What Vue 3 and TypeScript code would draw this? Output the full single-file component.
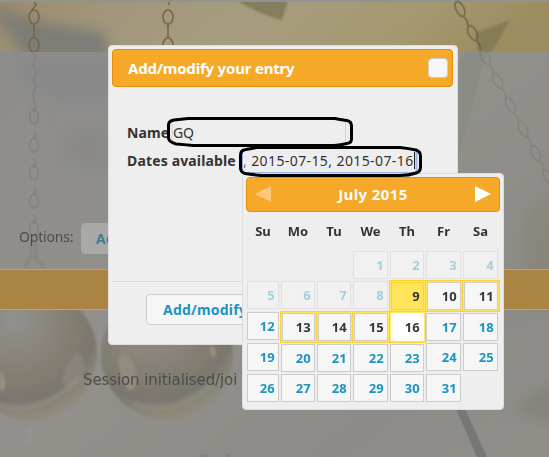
<script setup lang="ts">
interface Day {
  n: number
  past: boolean
  picked: boolean
  today: boolean
  current: boolean
  low: boolean
}

const weekdays = ['Su', 'Mo', 'Tu', 'We', 'Th', 'Fr', 'Sa']
const picked = [9, 10, 11, 13, 14, 15, 16]
const lowered = [17, 18, 20, 21, 22, 23]
const days: Day[] = Array.from({ length: 31 }, (_, i) => {
  const n = i + 1
  return {
    n,
    past: n < 9,
    picked: picked.includes(n),
    today: n === 9,
    current: n === 16,
    low: picked.includes(n) || lowered.includes(n),
  }
})

const leftLinks = [117, 145, 173, 201, 229]
const slantLinks = Array.from({ length: 8 }, (_, i) => ({ x: 460 + i * 12.6, y: 9 + i * 24 }))
</script>

<template>
  <div class="page">
    <svg class="scene" width="549" height="457" viewBox="0 0 549 457" aria-hidden="true">
      <defs>
        <linearGradient id="sky" x1="0" x2="1" y1="0" y2="0.1">
          <stop offset="0" stop-color="#9a8b6c" />
          <stop offset="0.2" stop-color="#a1967a" />
          <stop offset="0.5" stop-color="#a79d7f" />
          <stop offset="0.8" stop-color="#a4986f" />
          <stop offset="1" stop-color="#9c8c5f" />
        </linearGradient>
        <linearGradient id="haze" x1="0" x2="1" y1="0" y2="1">
          <stop offset="0" stop-color="#8d8c8a" />
          <stop offset="0.5" stop-color="#92908b" />
          <stop offset="0.8" stop-color="#8c8b87" />
          <stop offset="1" stop-color="#918f8a" />
        </linearGradient>
        <radialGradient id="ball" cx="0.38" cy="0.24" r="0.78">
          <stop offset="0" stop-color="#919190" />
          <stop offset="0.3" stop-color="#8b877c" />
          <stop offset="0.65" stop-color="#807b6f" />
          <stop offset="0.79" stop-color="#7a7770" />
          <stop offset="0.9" stop-color="#8a8576" />
          <stop offset="1" stop-color="#908c81" />
        </radialGradient>
        <filter id="soft" x="-50%" y="-50%" width="200%" height="200%"><feGaussianBlur stdDeviation="7" /></filter>
        <filter id="fine"><feGaussianBlur stdDeviation="1" /></filter>
        <clipPath id="top"><rect y="2" width="549" height="50" /></clipPath>
      </defs>
      <rect width="549" height="457" fill="url(#haze)" />
      <rect width="549" height="2" fill="#929292" />
      <g clip-path="url(#top)">
        <rect y="2" width="549" height="50" fill="url(#sky)" />
        <path d="M-10 5L40 22L105 32L115 90H45Z" fill="#7d7b76" filter="url(#soft)" />
        <path d="M236 -5H290L282 20Q260 15 236 0Z" fill="#867d5b" filter="url(#fine)" />
        <path d="M475 33L510 20L492 52H478Z" fill="#877c58" filter="url(#fine)" />
      </g>
      <g filter="url(#soft)">
        <path d="M10 58H110V100L70 105L25 85Z" fill="#88888a" />
        <path d="M65 130H110V175L60 160Z" fill="#8a8987" />
        <path d="M525 215L570 180V310H518Z" fill="#89867c" />
        <path d="M510 410L570 370V430Z" fill="#84837d" />
      </g>
      <path d="M458 160L487 52H465L458 65Z" fill="#8b8b86" filter="url(#fine)" />
      <g filter="url(#fine)">
        <circle cx="31" cy="354" r="66" fill="url(#ball)" />
        <circle cx="167" cy="354" r="66" fill="url(#ball)" />
        <path d="M62 381Q64 363 78 352Q90 364 80 386Q73 399 62 381Z" fill="#88847a" />
        <path d="M118 358Q129 346 136 372Q139 391 129 390Q120 383 118 358Z" fill="#918c7e" />
        <path d="M0 371Q8 380 4 390L0 391Z" fill="#97917d" />
        <path d="M211 345Q219 350 214 358Q209 356 211 345Z" fill="#969079" />
        <path d="M-4 404Q38 420 80 377" fill="none" stroke="#939084" stroke-width="6" opacity=".5" />
        <path d="M133 403Q177 420 219 378" fill="none" stroke="#939084" stroke-width="6" opacity=".5" />
        <path d="M26 430Q24 448 31 444Q36 432 30 423Z" fill="#949390" />
        <path d="M31 242V258L25 266M36 242V258L45 268" fill="none" stroke="#817e76" stroke-width="1.5" />
      </g>
      <g fill="none" stroke="#77684b" stroke-width="1.7" clip-path="url(#top)">
        <path d="M33 0L36 5L32 10M34 23V38M168 0L169 5M168 23V38" />
        <ellipse cx="34" cy="17" rx="5" ry="7" />
        <ellipse cx="34" cy="45" rx="5" ry="7" />
        <ellipse cx="168" cy="17" rx="5" ry="7" />
        <ellipse cx="168" cy="45" rx="5" ry="7" />
      </g>
      <g class="faint-chain">
        <g v-for="y in leftLinks" :key="y">
          <ellipse cx="34" :cy="y" rx="4.5" ry="7" />
          <path :d="`M34 ${y - 14}L36 ${y - 10}L33 ${y - 7}`" />
        </g>
        <path d="M33 53L36 58L33 65L36 72L33 80L36 86L33 94L35 104" />
      </g>
      <g class="slant-chain">
        <g v-for="(l, i) in slantLinks" :key="i" :class="{ strong: i < 2 }" :transform="`translate(${l.x} ${l.y}) rotate(-27)`">
          <ellipse rx="4" ry="8" />
          <path d="M0 8L1 14L-1 20" />
        </g>
      </g>
      <path d="M456 409H465L487 457H477Z" fill="#777876" />
      <path d="M201 457V454H208V457M226 457V454H231V457" fill="#858380" />
    </svg>

    <div class="options">
      <span>Options:</span>
      <button type="button">Add</button>
    </div>
    <div class="stripe"></div>
    <p class="status">Session initialised/joi</p>

    <section class="dialog">
      <header class="dialog-title">
        <span>Add/modify your entry</span>
        <button type="button" class="close" aria-label="Close"></button>
      </header>
      <div class="form">
        <div class="field"><b class="name-label">Name</b><span class="name-value">GQ</span></div>
        <div class="field"><b class="dates-label">Dates available</b><span class="dates-value"><i>,</i> 2015-07-15, 2015-07-16</span></div>
      </div>
      <footer><button type="button">Add/modify</button></footer>
    </section>

    <section class="picker">
      <header class="month">
        <svg width="16" height="16" viewBox="0 0 16 16"><path d="M16 0V16L0 8Z" fill="#fbc77b" /></svg>
        <span>July 2015</span>
        <svg width="16" height="16" viewBox="0 0 16 16"><path d="M0 0V16L16 8Z" fill="#fff" /></svg>
      </header>
      <div class="grid week"><span v-for="d in weekdays" :key="d">{{ d }}</span></div>
      <div class="grid days">
        <span
          v-for="d in days"
          :key="d.n"
          class="day"
          :class="{ first: d.n === 1, past: d.past, picked: d.picked, today: d.today, current: d.current, low: d.low }"
        >{{ d.n }}</span>
      </div>
    </section>

    <svg class="marks" width="549" height="457" viewBox="0 0 549 457" aria-hidden="true">
      <path d="M172 120.5V144M345.5 121V143" stroke="#d4d4d4" />
      <path d="M242.5 149V172M243 172.5H417" stroke="#8fb0ea" fill="none" />
      <path d="M416.5 149V172" stroke="#9ab6ee" stroke-width="2" />
      <path d="M414.5 152V169" stroke="#222" />
      <g fill="none" stroke="#000" stroke-width="3" stroke-linejoin="round">
        <path d="M168.5 125Q168.5 121 174 120L188 118.500H335Q343 120 347 120.500Q351.500 121.500 351.500 126V139Q351.500 143 347 143.500Q341 145 334 145.500H193Q183 144.500 176 144Q168.500 142 168.500 138Z" />
        <path d="M240.500 155Q240.500 150 246 149.500L257 147.500H400Q409 148.500 416 150Q420.500 151.500 420.500 156V167Q420.500 172 416 173Q409 175.500 400 175.500H262Q252 174.500 245 173.500Q240.500 172 240.500 168Z" />
      </g>
    </svg>
  </div>
</template>

<style>
body {
  margin: 0;
}
</style>

<style scoped>
.page {
  position: relative;
  width: 549px;
  height: 457px;
  overflow: hidden;
  font-family: "Noto Sans", "Open Sans", sans-serif;
  font-size: 14px;
  color: #333;
}
.page * {
  box-sizing: border-box;
}
.scene,
.marks {
  position: absolute;
  inset: 0;
  display: block;
}
.faint-chain,
.slant-chain {
  fill: none;
  stroke: #7c7971;
  stroke-width: 1.3;
  opacity: 0.6;
}
.slant-chain .strong {
  stroke: #65593e;
  stroke-width: 2;
}
button {
  font: inherit;
  font-weight: 700;
  letter-spacing: 0.2px;
  color: #1c94c4;
  background: #f6f6f6;
  border: 1px solid #ccc;
  border-radius: 4px;
  padding: 0;
  white-space: nowrap;
}
.options {
  position: absolute;
  left: 19px;
  top: 223px;
  display: flex;
  gap: 7px;
  line-height: 28px;
  letter-spacing: -0.2px;
  color: #4d4c4b;
}
.options span {
  width: 55px;
}
.options button {
  width: 60px;
  height: 31px;
  padding-left: 14px;
  text-align: left;
  color: #427b92;
  background: #a9a9a8;
  border-color: #aaa;
}
.stripe {
  position: absolute;
  left: 0;
  top: 269px;
  width: 549px;
  height: 41px;
  background: #ab8443;
  border: solid #aaa69d;
  border-width: 1px 0;
}
.status {
  position: absolute;
  left: 83px;
  top: 370px;
  margin: 0;
  line-height: 20px;
  font-family: "DejaVu Sans", sans-serif;
  font-size: 15px;
  letter-spacing: -0.1px;
  color: #4d4c49;
  white-space: nowrap;
}
.dialog {
  position: absolute;
  left: 108px;
  top: 45px;
  width: 350px;
  height: 300px;
  padding: 3px;
  display: flex;
  flex-direction: column;
  background: #eee;
  border: 1px solid #ddd;
  border-radius: 4px;
}
.dialog-title {
  width: 341px;
  height: 38px;
  padding: 0 4px 0 15px;
  display: flex;
  align-items: center;
  justify-content: space-between;
  background: #f6a828;
  border: 1px solid #e78f08;
  border-radius: 4px;
  color: #fff;
  font-size: 15px;
  font-weight: 700;
  letter-spacing: -0.2px;
}
.close {
  width: 20px;
  height: 20px;
}
.form {
  flex: 1;
  padding: 31px 0 0 15px;
}
.field {
  height: 28px;
  display: flex;
  align-items: center;
  white-space: nowrap;
}
.field b {
  letter-spacing: 0.15px;
}
.name-label {
  width: 46px;
}
.dates-label {
  width: 116px;
}
.name-value {
  letter-spacing: -0.3px;
}
.dates-value {
  letter-spacing: 0.4px;
}
.dates-value i {
  font-style: normal;
  color: #66779c;
}
footer {
  height: 60px;
  padding: 12px 0 0 34px;
  border-top: 1px solid #ddd;
}
footer button {
  display: block;
  width: 125px;
  height: 31px;
  padding-left: 16px;
  text-align: left;
}
.picker {
  position: absolute;
  left: 242px;
  top: 173px;
  width: 262px;
  height: 237px;
  padding: 3px 3px 0;
  background: #eee;
  border: 1px solid #ddd;
  border-radius: 4px;
}
.month {
  height: 35px;
  padding: 0 8px 1px;
  display: flex;
  align-items: center;
  justify-content: space-between;
  background: #f6a828;
  border: 1px solid #e78f08;
  border-radius: 4px;
  color: #fff;
  font-size: 15px;
  font-weight: 700;
  letter-spacing: 0.4px;
}
.grid {
  display: grid;
  grid-template-columns: 32px 34px 34px 35px 34px 35px 35px;
  column-gap: 2px;
  padding-left: 1px;
  font-size: 13px;
  font-weight: 700;
}
.week {
  height: 39px;
  line-height: 38px;
  text-align: center;
}
.days {
  grid-template-rows: 27px repeat(4, 28px);
  row-gap: 3px;
}
.day {
  height: 28px;
  padding-right: 3px;
  line-height: 26px;
  letter-spacing: 0.2px;
  text-align: right;
  color: #1c94c4;
  background: #f6f6f6;
  border: 1px solid #ccc;
}
.first {
  grid-column-start: 4;
}
.past {
  color: #a2cfe0;
  background: #f1f1f1;
  border-color: #e1e1e1;
}
.low {
  margin-top: 1px;
}
.picked {
  margin-left: 1px;
  color: #363636;
  box-shadow: 0 0 0 1px #ffe45c, 0 0 0 2px #fed22f;
}
.today {
  background: #ffe45c;
  border-color: #fed22f;
}
.current {
  background: #fff;
  border-color: #fff;
}
</style>
